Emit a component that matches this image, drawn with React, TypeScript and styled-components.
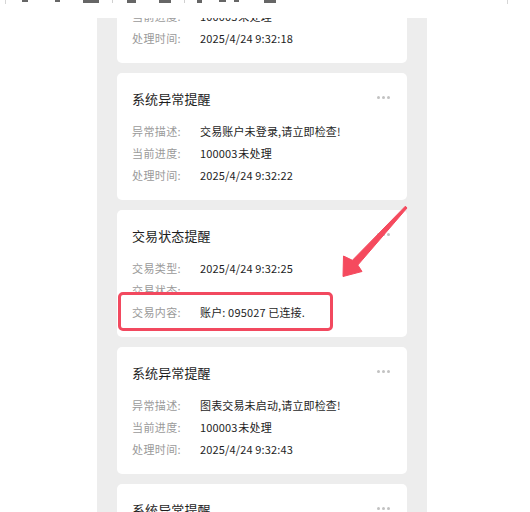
import React from "react";
import styled, { createGlobalStyle } from "styled-components";

const Global = createGlobalStyle`
  html, body { margin: 0; padding: 0; background: #ffffff; }
  body { font-family: "Noto Sans CJK SC", "Noto Sans", sans-serif; }
  * { box-sizing: border-box; }
`;

const Page = styled.div`
  position: relative;
  width: 530px;
  height: 512px;
  overflow: hidden;
  background: #ffffff;
`;

const Toolbar = styled.div`
  display: flex;
  align-items: flex-start;
  height: 4px;
  margin: 0 22px 14px 5px;
  border-left: 1px solid #d6d6d6;
  border-right: 1px solid #d6d6d6;
  overflow: hidden;
`;

const Glyph = styled.span<{ $w: number; $ml: number; $h?: number }>`
  display: block;
  width: ${(p) => p.$w}px;
  height: ${(p) => p.$h ?? 2}px;
  margin-left: ${(p) => p.$ml}px;
  background: #666666;
`;

const ToolDivider = styled.span<{ $ml: number }>`
  display: block;
  width: 1px;
  height: 3px;
  margin-left: ${(p) => p.$ml}px;
  background: #d0d0d0;
`;

const Feed = styled.div`
  margin-left: 97px;
  width: 330px;
  height: 494px;
  background: #ededed;
  overflow: hidden;
`;

const List = styled.div`
  display: flex;
  flex-direction: column;
  gap: 10px;
  padding: 0 20px;
  margin-top: -82px;
`;

const Card = styled.div`
  background: #ffffff;
  border-radius: 5px;
  padding: 16px 17px 14px 15px;
  height: 127px;
`;

const Header = styled.div`
  display: flex;
  justify-content: space-between;
  align-items: flex-start;
  height: 20px;
  margin-bottom: 11px;
`;

const Title = styled.div`
  font-size: 13px;
  line-height: 20px;
  color: #1e1e1e;
  letter-spacing: 0.1px;
`;

const More = styled.div`
  display: flex;
  gap: 2px;
  margin-top: 7px;
`;

const Dot = styled.span`
  width: 3px;
  height: 3px;
  border-radius: 50%;
  background: #c2c2c2;
`;

const Row = styled.div`
  display: flex;
  align-items: center;
  height: 22px;
  font-size: 11px;
  line-height: 22px;
  white-space: nowrap;
`;

const Label = styled.span`
  width: 68px;
  flex: none;
  color: #9a9a9a;
  letter-spacing: 0.4px;
`;

const Value = styled.span`
  color: #1e1e1e;
  letter-spacing: 0.15px;
`;

const Highlight = styled.div`
  position: relative;
  width: 215px;
  margin: -9px 0 0 -14px;
  padding: 6px 0 5px 11px;
  border: 3px solid #f2495f;
  border-radius: 5px;
  background: #ffffff;
`;

const ArrowLayer = styled.svg`
  position: absolute;
  left: 0;
  top: 0;
  pointer-events: none;
`;

type Item = { label: string; value: string };
type CardData = { title: string; rows: Item[]; highlight?: Item };

const cards: CardData[] = [
  {
    title: "系统异常提醒",
    rows: [
      { label: "异常描述:", value: "交易账户未登录,请立即检查!" },
      { label: "当前进度:", value: "100003\u200a未处理" },
      { label: "处理时间:", value: "2025/4/24 9:32:18" },
    ],
  },
  {
    title: "系统异常提醒",
    rows: [
      { label: "异常描述:", value: "交易账户未登录,请立即检查!" },
      { label: "当前进度:", value: "100003\u200a未处理" },
      { label: "处理时间:", value: "2025/4/24 9:32:22" },
    ],
  },
  {
    title: "交易状态提醒",
    rows: [
      { label: "交易类型:", value: "2025/4/24 9:32:25" },
      { label: "交易状态:", value: "" },
    ],
    highlight: { label: "交易内容:", value: "账户: 095027 已连接." },
  },
  {
    title: "系统异常提醒",
    rows: [
      { label: "异常描述:", value: "图表交易未启动,请立即检查!" },
      { label: "当前进度:", value: "100003\u200a未处理" },
      { label: "处理时间:", value: "2025/4/24 9:32:43" },
    ],
  },
  {
    title: "系统异常提醒",
    rows: [
      { label: "异常描述:", value: "交易账户未登录,请立即检查!" },
      { label: "当前进度:", value: "100003\u200a未处理" },
      { label: "处理时间:", value: "2025/4/24 9:32:50" },
    ],
  },
];

export default function App() {
  return (
    <Page>
      <Global />
      <Toolbar>
        <Glyph $w={6} $ml={16} />
        <Glyph $w={5} $ml={27} />
        <Glyph $w={16} $ml={23} $h={3} />
        <ToolDivider $ml={13} />
        <Glyph $w={9} $ml={14} $h={3} />
        <Glyph $w={12} $ml={23} $h={3} />
        <ToolDivider $ml={13} />
        <Glyph $w={5} $ml={12} $h={3} />
        <Glyph $w={7} $ml={17} />
        <Glyph $w={5} $ml={8} />
        <Glyph $w={12} $ml={25} $h={3} />
      </Toolbar>
      <Feed>
        <List>
          {cards.map((c, i) => (
            <Card key={i}>
              <Header>
                <Title>{c.title}</Title>
                <More>
                  <Dot />
                  <Dot />
                  <Dot />
                </More>
              </Header>
              {c.rows.map((r, j) => (
                <Row key={j}>
                  <Label>{r.label}</Label>
                  <Value>{r.value}</Value>
                </Row>
              ))}
              {c.highlight && (
                <Highlight>
                  <Row>
                    <Label>{c.highlight.label}</Label>
                    <Value>{c.highlight.value}</Value>
                  </Row>
                </Highlight>
              )}
            </Card>
          ))}
        </List>
      </Feed>
      <ArrowLayer width="530" height="512" viewBox="0 0 530 512">
        <polygon
          points="343,276.5 362,271.5 357.8,265.1 407,208 405.4,206.2 352.4,260.3 343.5,256"
          fill="#f54a5e"
          stroke="#f54a5e"
          strokeWidth="1"
          strokeLinejoin="round"
        />
      </ArrowLayer>
    </Page>
  );
}
